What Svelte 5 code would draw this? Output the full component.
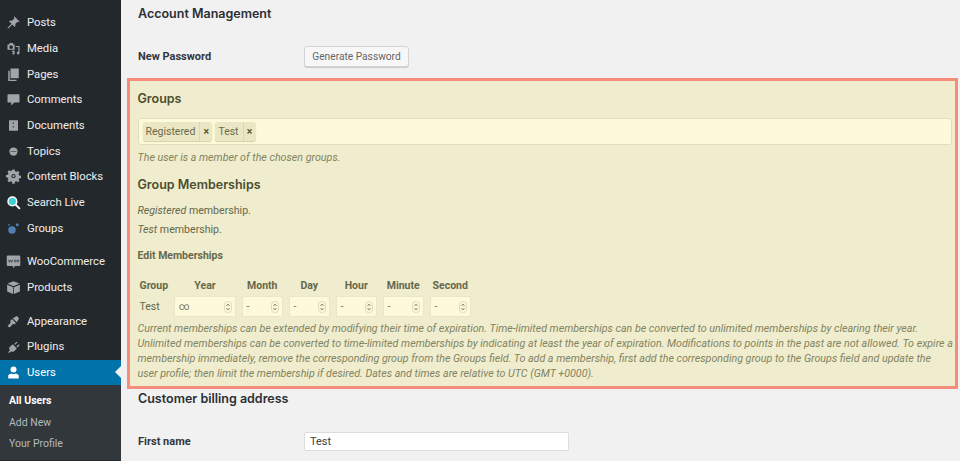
<script>
  const top1 = [
    { label: 'Posts', icon: 'posts' },
    { label: 'Media', icon: 'media' },
    { label: 'Pages', icon: 'pages' },
    { label: 'Comments', icon: 'comments' },
    { label: 'Documents', icon: 'documents' },
    { label: 'Topics', icon: 'topics' },
    { label: 'Content Blocks', icon: 'blocks' },
    { label: 'Search Live', icon: 'search' },
    { label: 'Groups', icon: 'groups' }
  ];
  const top2 = [
    { label: 'WooCommerce', icon: 'woo' },
    { label: 'Products', icon: 'products' }
  ];
  const top3 = [
    { label: 'Appearance', icon: 'appearance' },
    { label: 'Plugins', icon: 'plugins' }
  ];
  const fields = [
    { head: 'Year', value: '∞', wide: true },
    { head: 'Month', value: '-' },
    { head: 'Day', value: '-' },
    { head: 'Hour', value: '-' },
    { head: 'Minute', value: '-' },
    { head: 'Second', value: '-' }
  ];
</script>

{#snippet icon(name)}
  <svg class="ic" viewBox="0 0 20 20" aria-hidden="true">
    {#if name === 'posts'}
      <path d="M11 1.500l7 7-1.300 1-1.200-.6-3.200 3.200c.5 1.600.2 3-.6 4L8.300 12.700 3.500 17.500 2 18l.5-1.500 4.800-4.800-3.400-3.400c1-.8 2.400-1.100 4-.6l3.200-3.200-.6-1.200z"/>
    {:else if name === 'media'}
      <path d="M2 4.500h2l1-2h4l1 2h1.500v7H2zM6.800 5.500a2.500 2.500 0 1 0 0 5 2.500 2.500 0 0 0 0-5z"/>
      <path d="M13 6.500h5v9.500a1.800 1.800 0 1 1-1.500-1.700V8h-3.500z"/>
      <path d="M8 13h3.500v3.500a1.500 1.500 0 1 1-1.500-1.400V14.500H8z"/>
    {:else if name === 'pages'}
      <path d="M6 2h11v13H6z"/>
      <path d="M3 5h2v12h9v1.500H3z"/>
    {:else if name === 'comments'}
      <path d="M3 3h14a1 1 0 0 1 1 1v9a1 1 0 0 1-1 1h-6l-4 4v-4H3a1 1 0 0 1-1-1V4a1 1 0 0 1 1-1z"/>
    {:else if name === 'documents'}
      <path d="M4 3h12v14H4z"/><path fill="#23282d" d="M9 6h1.500v1.500H9zM9 11h1.500v1.500H9z"/>
    {:else if name === 'topics'}
      <circle cx="10" cy="10" r="5.500"/><path fill="#23282d" d="M6 9.600h8v.7H6z"/>
    {:else if name === 'blocks'}
      <path d="M8.500 1h3l.5 2.500 1.800.8L16 3l2 2-1.300 2.200.8 1.800 2.500.5v3l-2.500.5-.8 1.800L18 16l-2 2-2.200-1.300-1.800.8-.5 2.500h-3L8 17.500l-1.800-.8L4 18l-2-2 1.300-2.200-.8-1.800L0 11.500v-3L2.500 8l.8-1.800L2 4l2-2 2.200 1.300L8 2.500z" transform="translate(0 -.5)"/>
      <circle cx="10" cy="9.500" r="2.800" fill="#23282d"/><circle cx="10" cy="9.500" r="1.500"/>
    {:else if name === 'search'}
      <circle cx="8.500" cy="8.500" r="5.800" fill="#3fd0d4" stroke="#fff" stroke-width="2"/>
      <path d="M12.800 12.800L18.500 18.500" stroke="#fff" stroke-width="2.600" fill="none"/>
    {:else if name === 'groups'}
      <circle cx="8" cy="12" r="5" fill="#4f7fae"/><circle cx="15" cy="5" r="2" fill="#4f7fae"/><circle cx="4" cy="5" r="1.500" fill="#3b6488"/>
    {:else if name === 'woo'}
      <path d="M2.500 2h15A1.500 1.500 0 0 1 19 3.500v11a1.500 1.500 0 0 1-1.500 1.500H12l-2 3-1-3H2.500A1.500 1.500 0 0 1 1 14.500v-11A1.500 1.500 0 0 1 2.500 2z"/>
      <path d="M3.500 7.500l1 3.500L6 8l1.500 3L9 7.500M11 9.200a1.300 1.300 0 1 0 2.600 0 1.300 1.300 0 0 0-2.600 0zM14.500 9.200a1.300 1.300 0 1 0 2.600 0 1.300 1.300 0 0 0-2.600 0z" fill="none" stroke="#23282d" stroke-width=".9"/>
    {:else if name === 'products'}
      <path d="M10 1.500l8 3.300-8 3.400-8-3.400z"/><path d="M1.500 6.300l8 3.400v9l-8-3.500zM18.500 6.300l-8 3.400v9l8-3.500z"/>
    {:else if name === 'appearance'}
      <path d="M9 5.500l5.500-3 3 3-3 5.500z"/><path d="M8 6.800l5.200 5.200-1.800 2-2.100-1-4.300 5L2 16l4.500-4.800-1-2z"/>
    {:else if name === 'plugins'}
      <path d="M3 17.500l2-2.500-1-3.500 5-4.500 5.500 5.500-4.500 4.500-3.500-.5-2.500 2z"/><path d="M11 6.500l3-3 1.300 1.200-3 3zM14 10l3-3 1.200 1.200-3 3z"/>
    {:else if name === 'users'}
      <circle cx="10" cy="6" r="4"/><path d="M3 13.500c1.500-1.500 3-2 4-2.200 1.800 1 4.200 1 6 0 1 .2 2.500.7 4 2.200v4.500H3z"/>
    {/if}
  </svg>
{/snippet}

{#snippet spinner()}
  <svg class="spin" viewBox="0 0 8 12" aria-hidden="true">
    <rect x=".5" y=".5" width="7" height="11" rx="3" fill="#faf7d8" stroke="#e0dcb8"/>
    <path d="M2.500 5l1.500-2 1.500 2M2.500 7l1.500 2 1.500-2" fill="none" stroke="#77775a" stroke-width=".8"/>
  </svg>
{/snippet}

<div class="page">
  <aside class="side">
    <ul class="menu">
      {#each top1 as it}
        <li class="item">{@render icon(it.icon)}<span>{it.label}</span></li>
      {/each}
    </ul>
    <ul class="menu gap">
      {#each top2 as it}
        <li class="item">{@render icon(it.icon)}<span>{it.label}</span></li>
      {/each}
    </ul>
    <ul class="menu gap">
      {#each top3 as it}
        <li class="item">{@render icon(it.icon)}<span>{it.label}</span></li>
      {/each}
      <li class="item active">{@render icon('users')}<span>Users</span></li>
    </ul>
    <ul class="sub">
      <li class="cur">All Users</li>
      <li>Add New</li>
      <li>Your Profile</li>
    </ul>
  </aside>

  <main class="main">
    <h2 class="first">Account Management</h2>
    <div class="row pw">
      <span class="label">New Password</span>
      <button class="btn" type="button">Generate Password</button>
    </div>

    <section class="box">
      <h2 class="g">Groups</h2>
      <div class="tags">
        <span class="tag"><span class="t">Registered</span><span class="x">×</span></span>
        <span class="tag"><span class="t">Test</span><span class="x">×</span></span>
      </div>
      <p class="help">The user is a member of the chosen groups.</p>
      <h2 class="gm">Group Memberships</h2>
      <p class="ms"><em>Registered</em> membership.</p>
      <p class="ms two"><em>Test</em> membership.</p>
      <h4>Edit Memberships</h4>
      <div class="table">
        <span class="th lead">Group</span>
        {#each fields as f}
          <span class="th">{f.head}</span>
        {/each}
        <span class="td lead">Test</span>
        {#each fields as f}
          <span class="field">{f.value}{@render spinner()}</span>
        {/each}
      </div>
      <p class="note">Current memberships can be extended by modifying their time of expiration. Time-limited memberships can be converted to unlimited memberships by clearing their year. Unlimited memberships can be converted to time-limited memberships by indicating at least the year of expiration. Modifications to points in the past are not allowed. To expire a membership immediately, remove the corresponding group from the Groups field. To add a membership, first add the corresponding group to the Groups field and update the<br />user profile; then limit the membership if desired. Dates and times are relative to UTC (GMT +0000).</p>
    </section>

    <h2 class="bill">Customer billing address</h2>
    <div class="row fn">
      <span class="label">First name</span>
      <span class="text">Test</span>
    </div>
  </main>
</div>

<style>
  :global(body) {
    margin: 0;
    background: #f1f1f1;
    overflow: hidden;
  }
  .page {
    display: flex;
    width: 960px;
    height: 461px;
    overflow: hidden;
    font-family: Roboto, "Liberation Sans", sans-serif;
    font-size: 11px;
    color: #32373c;
  }
  .side {
    width: 121px;
    flex: none;
    background: #23282d;
    padding-top: 10px;
    box-sizing: border-box;
  }
  ul {
    list-style: none;
    margin: 0;
    padding: 0;
  }
  .gap {
    margin-top: 8px;
  }
  .item {
    position: relative;
    display: flex;
    align-items: center;
    height: 25.670px;
    padding-left: 6px;
    color: #eee;
    font-size: 11.300px;
  }
  .item span {
    margin-left: 6px;
  }
  .ic {
    width: 15px;
    height: 15px;
    fill: #a0a5aa;
    flex: none;
  }
  .active {
    background: #0073aa;
    color: #fff;
  }
  .active .ic {
    fill: #fff;
  }
  .active::after {
    content: "";
    position: absolute;
    right: 0;
    top: 50%;
    margin-top: -6px;
    border: 6px solid transparent;
    border-right-color: #f1f1f1;
    border-left-width: 0;
  }
  .sub {
    background: #32373c;
    padding: 5px 0 6px 9px;
    font-size: 10.500px;
    line-height: 21.400px;
    color: #b4b9be;
  }
  .sub .cur {
    color: #fff;
    font-weight: 700;
  }
  .main {
    flex: 1;
    min-width: 0;
    padding: 6px 2px 0 6px;
  }
  h2 {
    margin: 0;
    font-family: Inter, "Liberation Sans", sans-serif;
    font-size: 12.500px;
    line-height: 16px;
    font-weight: 600;
    color: #2a2f34;
  }
  .first,
  .bill,
  .row {
    margin-left: 11px;
  }
  .row {
    display: flex;
    align-items: center;
  }
  .label {
    width: 166px;
    font-size: 11px;
    font-weight: 700;
    color: #32373c;
    flex: none;
  }
  .pw {
    margin-top: 24px;
  }
  .btn {
    width: 105px;
    height: 21px;
    padding: 0;
    font: inherit;
    font-size: 10.200px;
    color: #666;
    background: #f7f7f7;
    border: 1px solid #d4d4d4;
    border-radius: 3px;
    box-shadow: 0 1px 0 #ccc;
  }
  .box {
    margin-top: 11px;
    height: 311px;
    box-sizing: border-box;
    border: 3.500px solid #f68d7c;
    background: #f0ecce;
    padding: 9.500px 3px 0 7.500px;
    color: #55583a;
  }
  .box h2 {
    color: #4b4e30;
  }
  .tags {
    display: flex;
    gap: 3px;
    align-items: center;
    height: 27px;
    box-sizing: border-box;
    margin-top: 11.500px;
    padding-left: 4px;
    background: #fdfadb;
    border: 1px solid #e2deb9;
    border-radius: 3px;
  }
  .tag {
    display: flex;
    height: 19px;
    background: #ebe6c3;
    border-radius: 3px;
    box-shadow: 0 1px 1px #d5d0aa;
    line-height: 19px;
    font-size: 10.500px;
  }
  .t {
    padding: 0 4px 0 3px;
    color: #6a6c4b;
  }
  .x {
    width: 12px;
    text-align: center;
    border-left: 1px solid #dcd7b3;
    font-weight: 700;
    color: #55583a;
  }
  p {
    margin: 0;
  }
  .help {
    margin-top: 6px;
    font-size: 10.700px;
    line-height: 14px;
    font-style: italic;
    color: #82845f;
  }
  .gm {
    margin-top: 12px;
  }
  .ms {
    margin-top: 11px;
    font-size: 10.600px;
    line-height: 14px;
    color: #66684a;
  }
  .ms.two {
    margin-top: 5px;
  }
  h4 {
    margin: 12px 0 0;
    font-size: 10.500px;
    line-height: 14px;
    font-weight: 700;
    color: #66684a;
  }
  .table {
    display: grid;
    grid-template-columns: 29px 62px repeat(5, 41.500px);
    column-gap: 5.500px;
    margin-top: 15px;
    margin-left: 2px;
  }
  .th {
    font-size: 10.500px;
    font-weight: 700;
    line-height: 16px;
    text-align: center;
    color: #66684a;
    white-space: nowrap;
  }
  .lead {
    text-align: left;
  }
  .td {
    font-size: 10.500px;
    line-height: 21px;
    margin-top: 2px;
    color: #66684a;
  }
  .field {
    display: flex;
    align-items: center;
    justify-content: space-between;
    box-sizing: border-box;
    height: 21px;
    margin-top: 2px;
    padding: 0 3px 0 4px;
    background: #fdfadb;
    border: 1px solid #ebe7c5;
    border-radius: 2px;
    font-size: 10.500px;
    color: #77795a;
  }
  .spin {
    width: 8px;
    height: 12px;
  }
  .note {
    margin-top: 3.500px;
    margin-right: -3px;
    font-size: 10.700px;
    line-height: 15px;
    font-style: italic;
    color: #82845f;
  }
  .bill {
    margin-top: 2px;
  }
  .fn {
    margin-top: 25px;
  }
  .text {
    width: 265px;
    height: 19px;
    line-height: 17px;
    box-sizing: border-box;
    padding-left: 5px;
    background: #fff;
    border: 1px solid #ddd;
    border-radius: 2px;
    font-size: 11px;
    color: #3c4146;
  }
</style>
